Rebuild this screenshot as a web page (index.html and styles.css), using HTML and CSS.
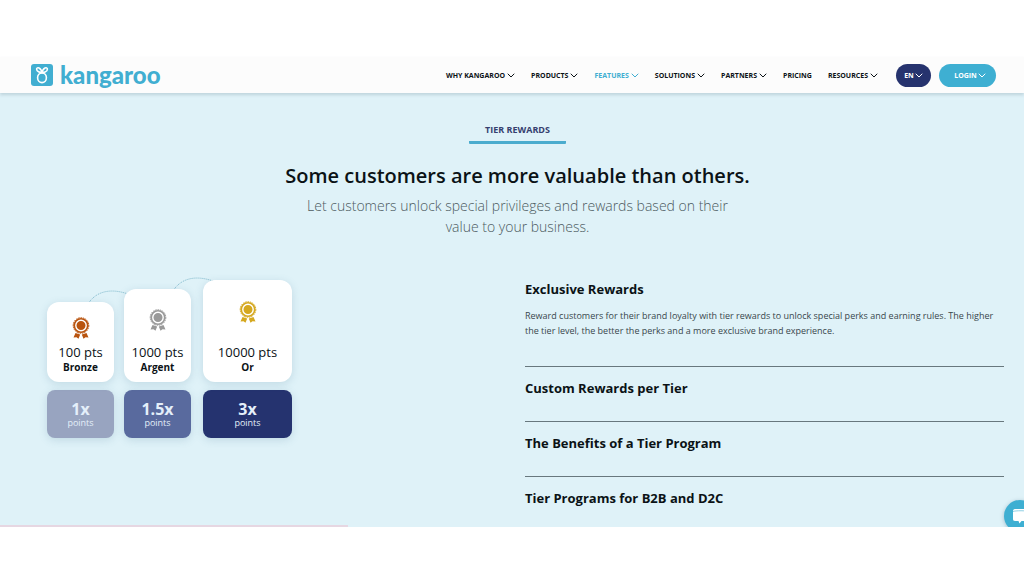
FILE: index.html
```
<!DOCTYPE html>
<html lang="en">
<head>
<meta charset="utf-8">
<meta name="viewport" content="width=device-width, initial-scale=1">
<title>Kangaroo - Tier Rewards</title>
<link rel="stylesheet" href="styles.css">
</head>
<body>

<svg class="defs" aria-hidden="true">
  <symbol id="chevron" viewBox="0 0 8 5">
    <path d="M1 1 L4 4 L7 1" fill="none" stroke="currentColor" stroke-width="1" stroke-linecap="round" stroke-linejoin="round"/>
  </symbol>
  <symbol id="medal" viewBox="0 0 18 22">
    <path d="M3.5 16 L1.5 20.5 L4.5 20.3 L6.5 21.8 L8.2 17.4 Z M14.5 16 L16.5 20.5 L13.5 20.3 L11.5 21.8 L9.8 17.4 Z" fill="currentColor"/>
    <circle cx="9" cy="8.5" r="7.6" fill="currentColor"/>
    <circle cx="9" cy="8.5" r="7.8" fill="none" stroke="currentColor" stroke-width="1" stroke-dasharray="1.6 0.8"/>
    <circle cx="9" cy="8.5" r="5.2" fill="none" stroke="#fff" stroke-width="1.4"/>
  </symbol>
</svg>

<header class="header">
  <a class="logo" href="#">
    <svg class="logo-mark" viewBox="0 0 22 22" aria-hidden="true">
      <rect width="22" height="22" rx="3" fill="#41aed1"/>
      <g fill="none" stroke="#fff" stroke-width="1.6" stroke-linecap="round">
        <ellipse cx="11" cy="13.8" rx="4.4" ry="4.8"/>
        <path d="M11 8.6 C9 8.6 5.6 7.6 5.6 5 C5.8 2.8 10 3.2 11 8.6 C12 3.2 16.2 2.800 16.400 5 C16.400 7.600 13 8.600 11 8.600"/>
      </g>
    </svg>
    <span>kangaroo</span>
  </a>
  <nav class="nav">
    <a href="#">WHY KANGAROO <svg class="chevron"><use href="#chevron"/></svg></a>
    <a href="#">PRODUCTS <svg class="chevron"><use href="#chevron"/></svg></a>
    <a class="active" href="#">FEATURES <svg class="chevron"><use href="#chevron"/></svg></a>
    <a href="#">SOLUTIONS <svg class="chevron"><use href="#chevron"/></svg></a>
    <a href="#">PARTNERS <svg class="chevron"><use href="#chevron"/></svg></a>
    <a href="#">PRICING</a>
    <a href="#">RESOURCES <svg class="chevron"><use href="#chevron"/></svg></a>
  </nav>
  <div class="actions">
    <button class="pill pill-lang" type="button">EN <svg class="chevron"><use href="#chevron"/></svg></button>
    <button class="pill pill-login" type="button">LOGIN <svg class="chevron"><use href="#chevron"/></svg></button>
  </div>
</header>

<main class="main">
  <section class="intro">
    <p class="tag">TIER REWARDS</p>
    <h1>Some customers are more valuable than others.</h1>
    <p class="lead">Let customers unlock special privileges and rewards based on their value to your business.</p>
  </section>

  <section class="columns">
    <div class="tiers">
      <div class="tier tier-bronze">
        <div class="card">
          <svg class="medal"><use href="#medal"/></svg>
          <p class="pts">100 pts</p>
          <p class="name">Bronze</p>
        </div>
        <div class="rate"><strong>1x</strong>points</div>
        <svg class="arc" viewBox="0 0 42 16" aria-hidden="true"><path d="M1 15 C9 2 24 -1 41 5"/></svg>
      </div>
      <div class="tier tier-silver">
        <div class="card">
          <svg class="medal"><use href="#medal"/></svg>
          <p class="pts">1000 pts</p>
          <p class="name">Argent</p>
        </div>
        <div class="rate"><strong>1.5x</strong>points</div>
        <svg class="arc" viewBox="0 0 42 16" aria-hidden="true"><path d="M1 15 C9 2 24 -1 41 5"/></svg>
      </div>
      <div class="tier tier-gold">
        <div class="card">
          <svg class="medal"><use href="#medal"/></svg>
          <p class="pts">10000 pts</p>
          <p class="name">Or</p>
        </div>
        <div class="rate"><strong>3x</strong>points</div>
      </div>
    </div>

    <div class="accordion">
      <div class="item open">
        <h2><button type="button" aria-expanded="true">Exclusive Rewards</button></h2>
        <p>Reward customers for their brand loyalty with tier rewards to unlock special perks and earning rules. The higher the tier level, the better the perks and a more exclusive brand experience.</p>
      </div>
      <div class="item">
        <h2><button type="button" aria-expanded="false">Custom Rewards per Tier</button></h2>
      </div>
      <div class="item">
        <h2><button type="button" aria-expanded="false">The Benefits of a Tier Program</button></h2>
      </div>
      <div class="item">
        <h2><button type="button" aria-expanded="false">Tier Programs for B2B and D2C</button></h2>
      </div>
    </div>
  </section>

  <div class="progress"></div>
  <button class="chat" type="button" aria-label="Open chat">
    <svg viewBox="0 0 18 16" aria-hidden="true">
      <path d="M3 1 H15 C16.5 1 17 2 17 3 V11 C17 12 16.5 13 15 13 H9.5 L7.5 15.5 L6.5 13 H3 C1.5 13 1 12 1 11 V3 C1 2 1.5 1 3 1 Z" fill="#fff"/>
      <path d="M1 3.5 C3 2.5 15 2.5 17 3.5" fill="none" stroke="#41aed1" stroke-width="0.6"/>
    </svg>
  </button>
</main>

</body>
</html>
```
FILE: styles.css
```
* {
  box-sizing: border-box;
}

body {
  margin: 0;
  min-height: 100vh;
  padding: 57px 0 49px;
  display: flex;
  flex-direction: column;
  background: #fff;
  color: #0b1216;
  font-family: "Open Sans", "Liberation Sans", sans-serif;
}

h1, h2, p {
  margin: 0;
}

a {
  color: inherit;
  text-decoration: none;
}

button {
  border: 0;
  padding: 0;
  background: none;
  color: inherit;
  font: inherit;
  cursor: pointer;
}

.defs {
  display: none;
}

/* header */
.header {
  position: relative;
  z-index: 1;
  display: flex;
  align-items: center;
  height: 36px;
  padding: 0 28px 0 31px;
  background: #fcfcfc;
  box-shadow: 0 2px 3px rgba(60, 90, 110, 0.2);
}

.logo {
  display: flex;
  align-items: center;
  gap: 7px;
  margin-right: auto;
  color: #41aed1;
  font-family: Lato, sans-serif;
  font-size: 24px;
  line-height: 24px;
  font-weight: 900;
}

.logo-mark {
  width: 22px;
  height: 22px;
}

.nav {
  display: flex;
  gap: 16px;
  margin-right: 18px;
  font-size: 7px;
  font-weight: 700;
}

.nav a {
  display: flex;
  align-items: center;
  gap: 2px;
}

.nav .active {
  color: #41aed1;
}

.chevron {
  width: 8px;
  height: 5px;
}

.actions {
  display: flex;
  gap: 8px;
}

.pill {
  display: flex;
  align-items: center;
  justify-content: center;
  gap: 1px;
  height: 23px;
  border-radius: 12px;
  color: #fff;
  font-size: 7px;
  font-weight: 700;
}

.pill-lang {
  width: 35px;
  background: #26336e;
}

.pill-login {
  width: 57px;
  padding-left: 5px;
  background: #3eafd2;
}

/* page body */
.main {
  position: relative;
  flex: 1;
  padding: 30px 20px 0 31px;
  overflow: hidden;
  background: #dff2f8;
}

.intro {
  display: flex;
  flex-direction: column;
  align-items: center;
  text-align: center;
}

.tag {
  padding: 0 16px 4px;
  border-bottom: 3px solid #4bacce;
  border-radius: 1px;
  color: #35406f;
  font-size: 9px;
  line-height: 14px;
  font-weight: 700;
}

.intro h1 {
  margin-top: 17px;
  font-size: 20px;
  line-height: 30px;
  font-weight: 600;
}

.lead {
  max-width: 440px;
  margin-top: 4px;
  color: #4c5a60;
  font-size: 14px;
  line-height: 21px;
  font-weight: 300;
}

.columns {
  display: grid;
  grid-template-columns: 1fr 1fr;
  gap: 15px;
  margin-top: 43px;
}

/* tier cards */
.tiers {
  display: flex;
  align-items: flex-end;
  align-self: start;
  gap: 10px;
  padding-left: 16px;
}

.tier {
  position: relative;
  width: 67px;
}

.card {
  position: relative;
  z-index: 1;
  display: flex;
  flex-direction: column;
  align-items: center;
  height: 80px;
  margin-bottom: 8px;
  padding: 15px 0 8px;
  border-radius: 12px;
  background: #fff;
  box-shadow: 0 2px 8px rgba(70, 120, 150, 0.2);
}

.medal {
  width: 18px;
  height: 22px;
  margin-bottom: auto;
}

.pts {
  font-size: 13px;
  line-height: 16px;
}

.name {
  font-size: 10px;
  line-height: 14px;
  font-weight: 700;
}

.rate {
  display: flex;
  flex-direction: column;
  align-items: center;
  height: 48px;
  padding-top: 11px;
  border-radius: 8px;
  color: #e4effa;
  font-size: 9px;
  line-height: 10px;
  box-shadow: 0 2px 8px rgba(70, 120, 150, 0.2);
}

.rate strong {
  font-size: 16px;
  line-height: 17px;
}

.tier-bronze .medal { color: #b9540f; }
.tier-bronze .rate { background: #98a4c0; }

.tier-silver .card { height: 93px; padding-top: 20px; }
.tier-silver .medal { color: #999; }
.tier-silver .rate { background: #596a9e; }

.tier-gold { width: 89px; margin-left: 2px; }
.tier-gold .card { height: 102px; padding-top: 21px; }
.tier-gold .medal { color: #d5a81f; }
.tier-gold .rate { background: #25336f; }

/* dotted line that leads to the next card */
.arc {
  position: absolute;
  top: -13px;
  left: 40px;
  width: 42px;
  height: 16px;
  fill: none;
  stroke: #7fb9cc;
  stroke-width: 1;
  stroke-dasharray: 1 1;
}

.tier-silver .arc {
  left: 48px;
}

/* accordion */
.item {
  padding: 12px 0 23px;
  border-bottom: 1px solid #68787e;
}

.item:first-child {
  padding: 0 0 28px;
}

.item:last-child {
  border-bottom: 0;
  padding-bottom: 0;
}

.item h2 {
  font-size: 13px;
  line-height: 19px;
  font-weight: 700;
}

.item button {
  display: block;
  width: 100%;
  text-align: left;
}

.item p {
  margin-top: 9px;
  color: #39474c;
  font-size: 9px;
  line-height: 15px;
}

.progress {
  position: absolute;
  left: 0;
  bottom: 0;
  width: 34%;
  height: 2px;
  background: #e6d7e2;
}

.chat {
  position: absolute;
  right: -12px;
  bottom: -5px;
  width: 32px;
  height: 32px;
  border-radius: 50%;
  background: #3eafd2;
  box-shadow: 0 1px 4px rgba(40, 90, 120, 0.35);
}

.chat svg {
  display: block;
  width: 18px;
  height: 16px;
  margin-left: 8px;
}
```
